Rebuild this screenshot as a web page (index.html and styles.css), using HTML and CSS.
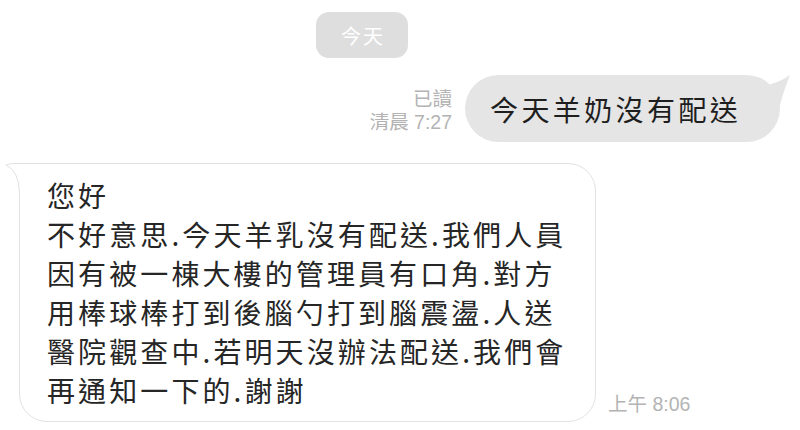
FILE: index.html
```html
<!DOCTYPE html>
<html lang="zh-Hant">

<head>
    <meta charset="UTF-8">
    <meta name="viewport" content="width=device-width, initial-scale=1.0">
    <title>聊天</title>
    <link rel="stylesheet" href="styles.css">
</head>

<body>
    <div class="chat">

        <div class="day">
            <span class="day-pill">今天</span>
        </div>

        <!-- sent -->
        <div class="row row-out">
            <div class="meta meta-out">
                <span>已讀</span>
                <span>清晨 7:27</span>
            </div>
            <div class="bubble bubble-out">
                今天羊奶沒有配送
                <svg class="tail-out" width="24" height="40" viewBox="0 0 24 40">
                    <path d="M0 10 Q14 6 22 0 Q14 20 10 38 L0 38 Z" fill="#e5e5e5" />
                </svg>
            </div>
        </div>

        <!-- received -->
        <div class="row row-in">
            <div class="bubble bubble-in">
                <svg class="tail-in" width="50" height="40" viewBox="0 0 50 40">
                    <path d="M50 0.5 L10 0.5 Q4 0.5 1 2 Q14 8 14.5 30 L14.5 40 Z" fill="#fff" />
                    <path d="M50 0.5 L10 0.5 Q4 0.5 1 2 Q14 8 14.5 30 L14.5 40" fill="none" stroke="#e2e2e2" stroke-width="1" />
                </svg>
                您好<br>
                不好意思.今天羊乳沒有配送.我們人員<br>
                因有被一棟大樓的管理員有口角.對方<br>
                用棒球棒打到後腦勺打到腦震盪.人送<br>
                醫院觀查中.若明天沒辦法配送.我們會<br>
                再通知一下的.謝謝
            </div>
            <div class="meta meta-in">
                <span>上午 8:06</span>
            </div>
        </div>

    </div>
</body>

</html>
```

FILE: styles.css
```css
* {
    margin: 0;
    padding: 0;
    box-sizing: border-box;
}

body {
    font-family: "Noto Sans CJK TC", "Noto Sans", sans-serif;
    background: #fff;
    color: #222;
    width: 800px;
    height: 430px;
    overflow: hidden;
}

.chat {
    display: flex;
    flex-direction: column;
    padding-top: 12px;
}

.day {
    display: flex;
    padding-left: 316px;
}

.day-pill {
    display: flex;
    align-items: center;
    justify-content: center;
    width: 92px;
    height: 46px;
    border-radius: 13px;
    background: #dedede;
    color: #fff;
    font-size: 20px;
    letter-spacing: 2px;
    padding-left: 2px;
}

.row {
    display: flex;
    align-items: flex-end;
}

.row-out {
    justify-content: flex-end;
    margin-top: 17px;
    padding-right: 20px;
    gap: 13px;
}

.row-in {
    margin-top: 21px;
    padding-left: 19px;
    gap: 12px;
}

/* read mark and time */
.meta {
    display: flex;
    flex-direction: column;
    font-family: "Liberation Sans", "Noto Sans CJK TC", sans-serif;
    font-size: 19.5px;
    line-height: 23px;
    color: #b3b3b3;
}

.meta-out {
    align-items: flex-end;
    padding-bottom: 8px;
}

.meta-in {
    padding-bottom: 6px;
}

.bubble {
    position: relative;
    font-size: 28px;
    letter-spacing: 3.1px;
    white-space: nowrap;
}

.bubble-out {
    display: flex;
    align-items: center;
    width: 315px;
    height: 67px;
    padding-left: 25px;
    border-radius: 34px;
    background: #e5e5e5;
    color: #1e1e1e;
    letter-spacing: 3.4px;
}

.tail-out {
    position: absolute;
    right: -12px;
    top: 0;
}

.bubble-in {
    width: 577px;
    padding: 12px 0 11px 27px;
    line-height: 39px;
    background: #fff;
    border: 1px solid #e2e2e2;
    border-radius: 28px;
    color: #262626;
}

.tail-in {
    position: absolute;
    left: -15px;
    top: -1px;
}
```
